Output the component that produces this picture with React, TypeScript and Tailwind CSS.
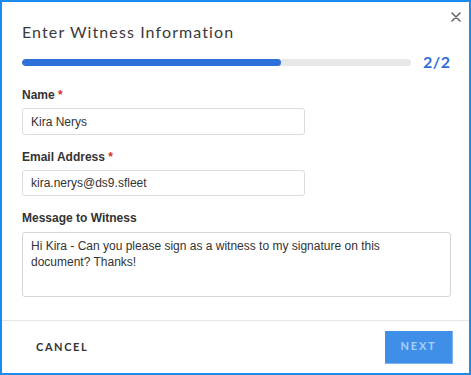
import React, { useState } from 'react';

const Label: React.FC<{ text: string; required?: boolean }> = ({ text, required }) => (
  <div className="text-[12px] leading-[18px] font-bold text-[#333] font-['Liberation_Sans',Arial,sans-serif]">
    {text}
    {required && <span className="text-[#d0342c]"> *</span>}
  </div>
);

export default function App() {
  const [name, setName] = useState('Kira Nerys');
  const [email, setEmail] = useState('kira.nerys@ds9.sfleet');
  const [message, setMessage] = useState(
    'Hi Kira - Can you please sign as a witness to my signature on this document? Thanks!'
  );

  return (
    <div className="relative w-[471px] h-[375px] bg-white border-2 border-[#1a8cf0] flex flex-col">
      {/* Close */}
      <button className="absolute top-[9px] right-[7px] w-[12px] h-[12px] flex items-center justify-center text-[#666]">
        <svg width="10" height="10" viewBox="0 0 10 10" stroke="currentColor" strokeWidth="1.6" strokeLinecap="round">
          <path d="M1 1L9 9M9 1L1 9" />
        </svg>
      </button>

      <div className="flex-1 pl-[20px] pr-[18px] pt-[18px]">
        <h2 className="text-[16px] leading-[24px] text-[#3a3a3a] tracking-[1.1px] font-['Lato',sans-serif]">
          Enter Witness Information
        </h2>

        {/* Progress */}
        <div className="mt-[8px] flex items-center h-[20px]">
          <div className="w-[389px] h-[7px] rounded-full bg-[#e7e7e7] overflow-hidden">
            <div className="h-full rounded-full bg-[#2f6fd9]" style={{ width: `${(259 / 389) * 100}%` }} />
          </div>
          <span className="ml-[12px] text-[16px] leading-[20px] font-bold text-[#2f6fd9] tracking-[0.5px] font-['Lato',sans-serif]">
            2/2
          </span>
        </div>

        <div className="mt-[14px]">
          <Label text="Name" required />
          <input
            value={name}
            onChange={e => setName(e.target.value)}
            className="mt-[4px] block w-[283px] h-[27px] px-[8px] border border-[#dcdcdc] rounded-[3px] text-[12px] text-[#333] outline-none font-['Liberation_Sans',Arial,sans-serif]"
          />
        </div>

        <div className="mt-[13px]">
          <Label text="Email Address" required />
          <input
            value={email}
            onChange={e => setEmail(e.target.value)}
            className="mt-[4px] block w-[283px] h-[26px] px-[8px] border border-[#dcdcdc] rounded-[3px] text-[12px] text-[#333] outline-none font-['Liberation_Sans',Arial,sans-serif]"
          />
        </div>

        <div className="mt-[13px]">
          <Label text="Message to Witness" />
          <textarea
            value={message}
            onChange={e => setMessage(e.target.value)}
            className="mt-[5px] block w-[429px] h-[65px] px-[8px] py-[5px] border border-[#d6d6d6] rounded-[3px] text-[12px] leading-[16px] text-[#333] outline-none resize-none font-['Liberation_Sans',Arial,sans-serif]"
          />
        </div>
      </div>

      {/* Footer */}
      <div className="h-[53px] border-t border-[#e6e6e6] flex items-center justify-between pl-[34px] pr-[16px]">
        <button className="text-[11px] font-bold tracking-[1.6px] text-[#333] font-['Lato',sans-serif]">CANCEL</button>
        <button className="w-[68px] h-[33px] bg-[#3f8fe9] border-r border-b border-[#7db5f2] text-[11px] font-bold tracking-[1.8px] text-[#a9d0f7] font-['Lato',sans-serif]">
          NEXT
        </button>
      </div>
    </div>
  );
}
